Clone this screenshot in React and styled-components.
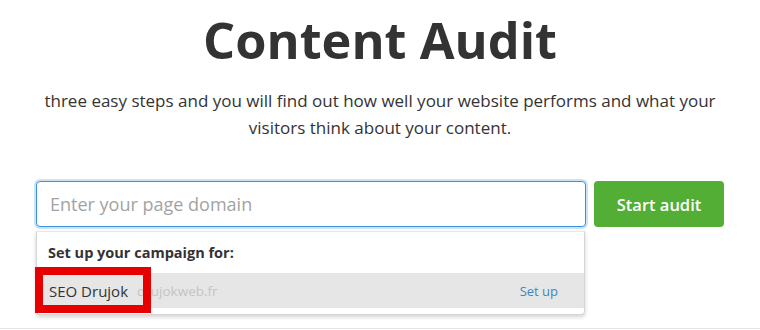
import styled, { createGlobalStyle } from "styled-components";

const GlobalStyle = createGlobalStyle`
  body {
    margin: 0;
    background: #fff;
    font-family: "Open Sans", "Noto Sans", sans-serif;
    color: #333;
  }
`;

function App() {
  return (
    <>
      <GlobalStyle />
      <Page>
        <Title>Content Audit</Title>
        <Lead>
          three easy steps and you will find out how well your website performs
          and what your visitors think about your content.
        </Lead>
        <Form>
          <Field>
            <DomainInput placeholder="Enter your page domain" autoFocus />
            <Menu>
              <MenuHeader>Set up your campaign for:</MenuHeader>
              <MenuRow>
                <ProjectName>SEO Drujok</ProjectName>
                <ProjectDomain>drujokweb.fr</ProjectDomain>
                <SetupLink href="#">Set up</SetupLink>
              </MenuRow>
              <Highlight />
            </Menu>
          </Field>
          <StartButton>Start audit</StartButton>
        </Form>
      </Page>
      <Footer />
    </>
  );
}

const Page = styled.div`
  height: 328px;
  display: flex;
  flex-direction: column;
  align-items: center;
`;

const Title = styled.h1`
  margin: 9px 0 0;
  font-size: 50.5px;
  line-height: 62px;
  font-weight: 700;
  color: #333;
`;

const Lead = styled.p`
  margin: 16px 0 0;
  width: 720px;
  text-align: center;
  font-size: 17px;
  line-height: 27px;
  color: #333;
`;

const Form = styled.div`
  margin-top: 40px;
  display: flex;
  gap: 8px;
`;

const Field = styled.div`
  position: relative;
  width: 550px;
`;

const DomainInput = styled.input`
  box-sizing: border-box;
  width: 100%;
  height: 46px;
  padding: 0 13px;
  border: 1px solid #3d8fe0;
  border-radius: 4px;
  box-shadow: 0 0 0 2px #cfe3f7;
  outline: none;
  font-family: inherit;
  font-size: 18px;
  color: #333;
  caret-color: #333;

  &::placeholder {
    color: #a3a3a3;
  }
`;

const Menu = styled.div`
  position: absolute;
  top: 50px;
  left: 0;
  right: 1px;
  box-sizing: border-box;
  padding-bottom: 6px;
  background: #fff;
  border: 1px solid #d6d6d6;
  border-top-color: #e8e8e8;
  border-radius: 0 0 4px 4px;
  box-shadow: 0 2px 4px rgba(0, 0, 0, 0.18);
`;

const MenuHeader = styled.div`
  padding: 11px 11px 0;
  height: 30px;
  font-size: 14.5px;
  font-weight: 700;
  color: #333;
`;

const MenuRow = styled.div`
  display: flex;
  align-items: center;
  height: 35px;
  padding: 0 26px 0 12px;
  background: #e6e6e6;
`;

const ProjectName = styled.span`
  font-size: 15px;
  color: #333;
`;

const ProjectDomain = styled.span`
  margin-left: 9px;
  font-size: 13.5px;
  color: #c4c4c4;
`;

const SetupLink = styled.a`
  margin-left: auto;
  font-size: 13px;
  color: #3b87c6;
  text-decoration: none;
`;

const Highlight = styled.div`
  position: absolute;
  left: -2px;
  top: 35px;
  width: 116px;
  height: 46px;
  box-sizing: border-box;
  border: 8px solid #e60000;
`;

const StartButton = styled.button`
  width: 130px;
  height: 46px;
  border: none;
  border-radius: 4px;
  background: #52ae35;
  color: #fff;
  font-family: inherit;
  font-size: 16.5px;
  font-weight: 600;
  cursor: pointer;
`;

const Footer = styled.div`
  border-top: 1px solid #e4e4e4;
`;

export default App;
